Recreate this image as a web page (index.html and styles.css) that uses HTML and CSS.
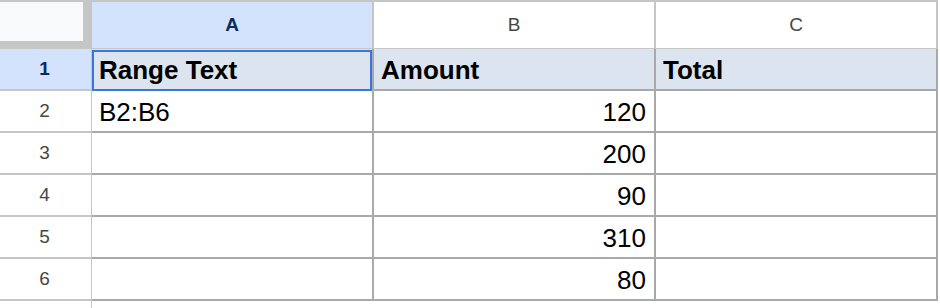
FILE: index.html
```html
<!DOCTYPE html>
<html>
<head>
<meta charset="utf-8">
<link rel="stylesheet" href="styles.css">
</head>
<body>
<div class="sheet">
  <div class="corner"><div class="corner-box"></div></div>
  <div class="colhead sel">A</div>
  <div class="colhead">B</div>
  <div class="colhead">C</div>

  <div class="rowhead sel">1</div>
  <div class="cell hdr a1">Range Text<div class="selection"></div></div>
  <div class="cell hdr">Amount</div>
  <div class="cell hdr">Total</div>

  <div class="rowhead">2</div>
  <div class="cell">B2:B6</div>
  <div class="cell num">120</div>
  <div class="cell"></div>

  <div class="rowhead">3</div>
  <div class="cell"></div>
  <div class="cell num">200</div>
  <div class="cell"></div>

  <div class="rowhead">4</div>
  <div class="cell"></div>
  <div class="cell num">90</div>
  <div class="cell"></div>

  <div class="rowhead">5</div>
  <div class="cell"></div>
  <div class="cell num">310</div>
  <div class="cell"></div>

  <div class="rowhead">6</div>
  <div class="cell"></div>
  <div class="cell num">80</div>
  <div class="cell"></div>

  <div class="rowhead last"></div>
  <div class="blank"></div>
  <div class="blank"></div>
  <div class="blank"></div>
</div>
</body>
</html>
```

FILE: styles.css
```css
html, body {
  margin: 0;
  padding: 0;
  background: #ffffff;
  overflow: hidden;
}

body {
  width: 940px;
  height: 308px;
  font-family: "Liberation Sans", Arial, sans-serif;
}

.sheet {
  display: grid;
  grid-template-columns: 92px 282px 282px 282px;
  grid-template-rows: 49px 42px 42px 42px 42px 42px 42px 7px;
}

.corner {
  background: #c4c7c5;
  border-top: 2px solid #c4c7c5;
  padding: 0 9px 8px 0;
  box-sizing: border-box;
}

.corner-box {
  background: #f8f9fa;
  height: 100%;
}

.colhead {
  box-sizing: border-box;
  border-top: 2px solid #c4c7c5;
  border-bottom: 1px solid #c4c7c5;
  border-right: 2px solid #c4c7c5;
  background: #ffffff;
  color: #444746;
  font-size: 19px;
  display: flex;
  align-items: center;
  justify-content: center;
}

.colhead.sel {
  background: #d3e3fd;
  color: #0b2a5b;
  font-weight: bold;
}

.rowhead {
  box-sizing: border-box;
  border-right: 1px solid #c4c7c5;
  border-bottom: 2px solid #c4c7c5;
  background: #ffffff;
  color: #444746;
  font-size: 19px;
  display: flex;
  align-items: center;
  justify-content: center;
  padding-right: 2px;
}

.rowhead.sel {
  background: #d3e3fd;
  color: #0b2a5b;
  font-weight: bold;
}

.rowhead.last {
  border-bottom: none;
}

.cell {
  position: relative;
  box-sizing: border-box;
  border-right: 2px solid #a9a9a9;
  border-bottom: 2px solid #a9a9a9;
  background: #ffffff;
  color: #000000;
  font-size: 26px;
  display: flex;
  align-items: center;
  padding: 2px 7px 0 7px;
  white-space: nowrap;
}

.cell.hdr {
  background: #dce5ef;
  font-weight: bold;
  padding-top: 2px;
}

.cell.num {
  justify-content: flex-end;
  padding-right: 8px;
}

.blank {
  background: #ffffff;
}

.selection {
  position: absolute;
  left: 0;
  top: 1px;
  right: 0;
  bottom: -2px;
  border: 2px solid #3a76e0;
  pointer-events: none;
}
```
